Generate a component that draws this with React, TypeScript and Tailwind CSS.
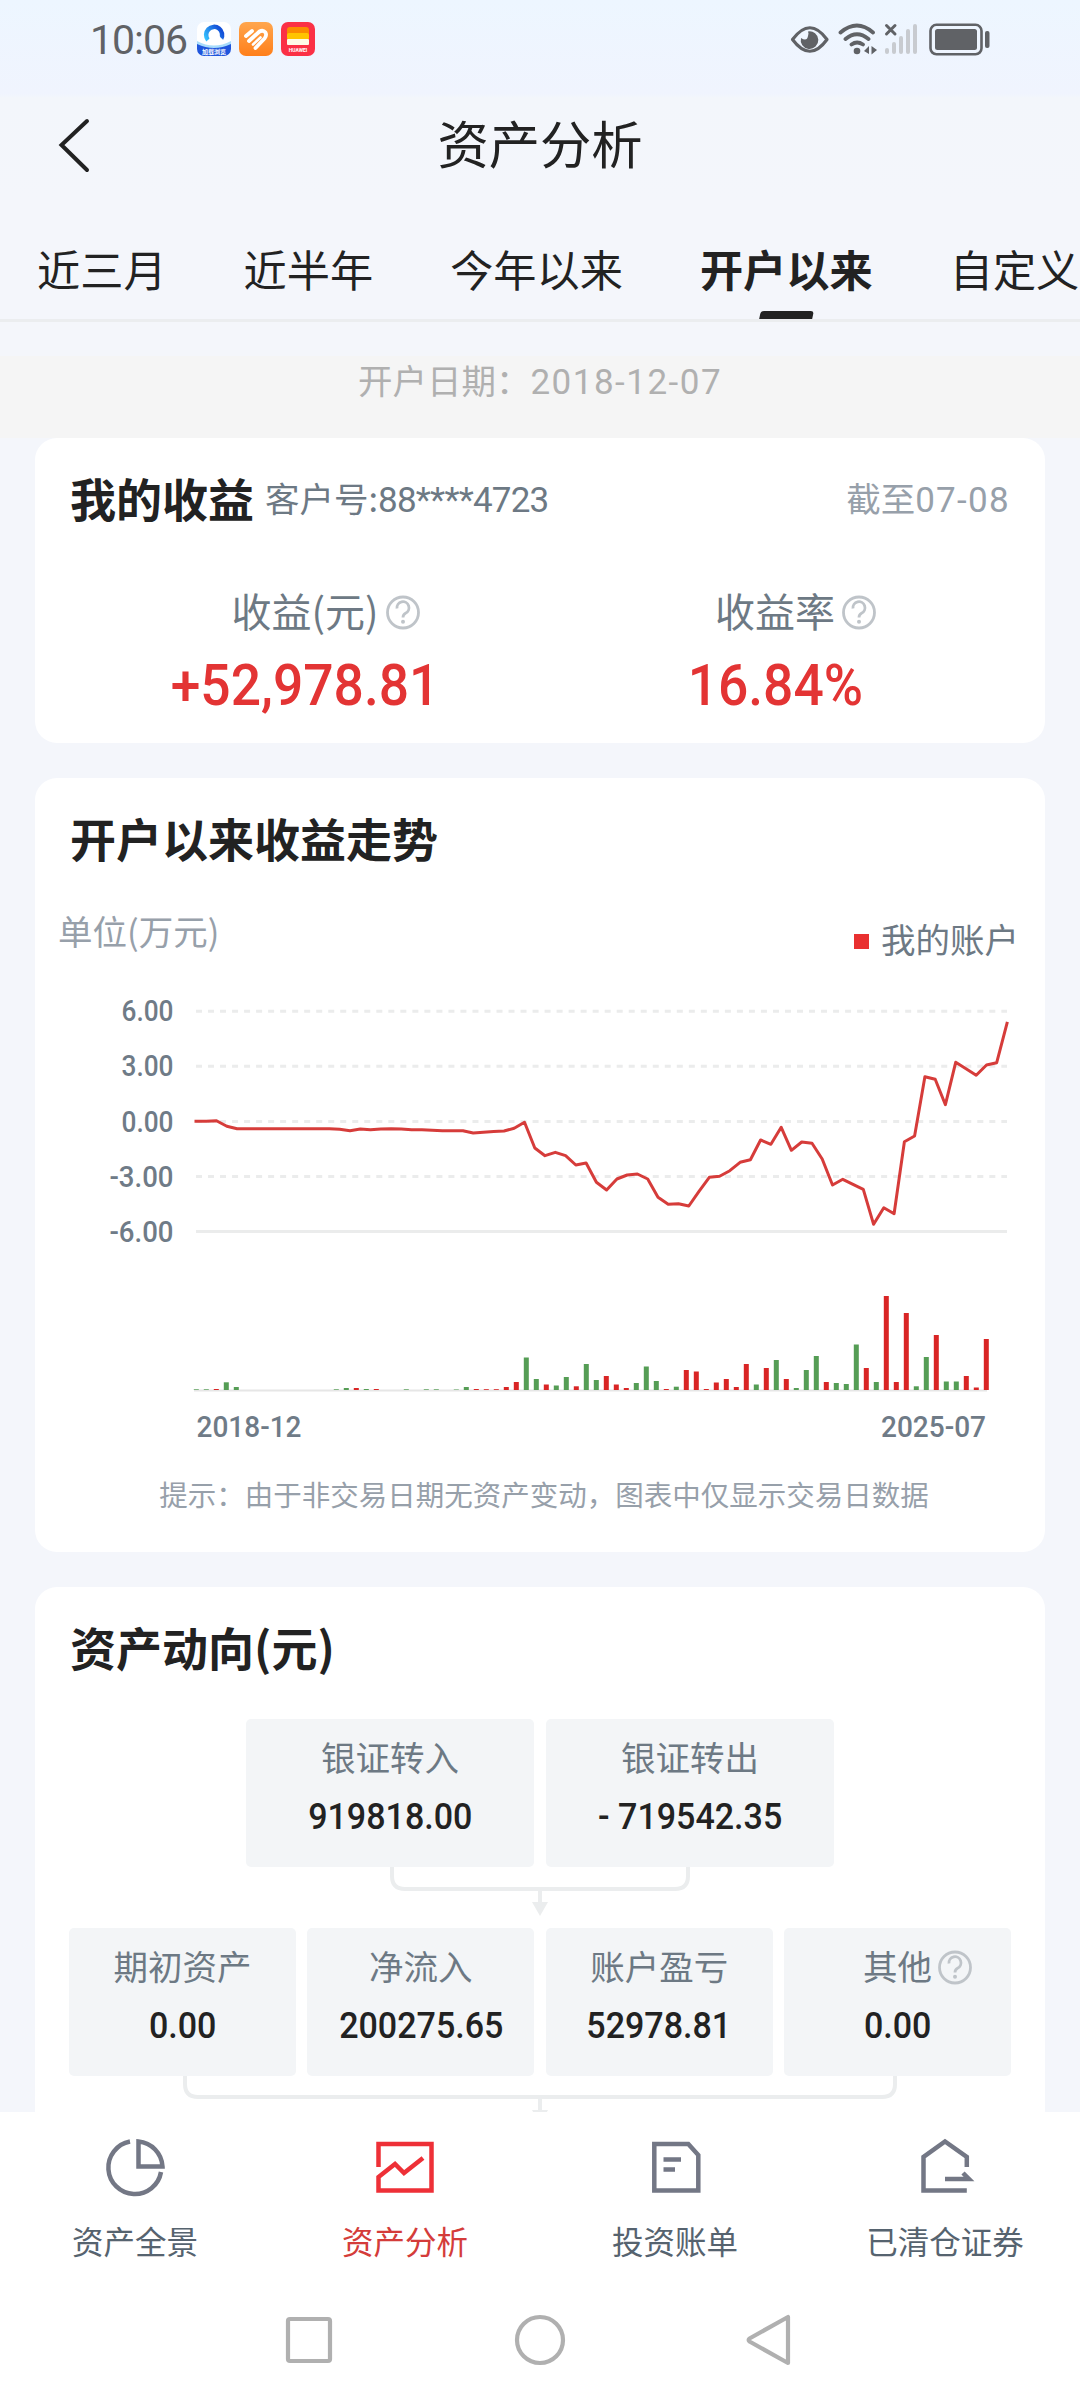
import type { ReactNode } from "react";

interface Bar {
    color: 'r' | 'g';
    height: number;
}

const TABS = ['近三月', '近半年', '今年以来', '开户以来', '自定义'];
const ACTIVE_TAB = '开户以来';

// y position inside the trend chart, one point per month
const TREND = [
    141.3, 141.3, 140.7, 146.3, 148.7, 148.7, 148.7, 148.7, 148.7, 148.7,
    148.7, 148.7, 148.7, 148.7, 149.3, 150.7, 149, 149.8, 149, 148.7,
    149, 149.7, 149.7, 150.3, 150.7, 150.7, 150.8, 153, 152.3, 151.5,
    151, 148.3, 142.3, 168, 175.7, 172.3, 175.7, 185, 183, 202.3,
    210, 199, 195, 194, 199, 217.3, 224.3, 223.7, 226, 211.3,
    197.3, 196.3, 190.7, 182.3, 179.7, 160, 164.3, 147.3, 170.3, 162,
    163.3, 179, 205, 199.3, 204.3, 209.3, 244.3, 227.7, 233.7, 161.7,
    156, 96.7, 99.3, 124.7, 82.3, 88.7, 95.3, 85, 82.7, 43.3,
];

const BARS = (
    'g.7 g.7 r1 g7.7 g3 g0 g0 g0 g0 g0 g0 g0 g0 g0 g.7 g2 r2 g1 r1 g0 ' +
    'g0 g.7 g0 g.7 g.7 g0 g.5 g3 r1 r.8 r.8 r3 r8 g32.5 g11 r5.5 g4.5 g13 r3.7 g26 ' +
    'g10 r14 r5.5 r2 g7 g23.5 g9 r1 g3.3 r20 r18.5 r1 r7.5 r11 r3 r26 g5.5 r22 g30 r11 ' +
    'g2 g20 g34 r8 g7 g6 g45.5 r22 g8 r94 r8 r77 g3.7 g33 r55 g8.5 g8.5 r14 r2.5 r51'
).split(' ').map((item) => ({ color: item[0], height: Number(item.slice(1)) }) as Bar);

const StatusBar = () => {
    return <div className="h-[80px] flex items-start justify-between pl-[90px] pr-[90px] text-[#606266]">
        <div className="flex items-start pt-[22px]">
            <div className="w-[107px] -mt-[6px] text-[41px] leading-[48px] tracking-[-1px] whitespace-nowrap font-['Roboto',sans-serif]">10:06</div>
            <div className="flex gap-2">
                <svg width="34" height="34" viewBox="0 0 34 34">
                    <defs>
                        <linearGradient id="ring" x1="0" y1="1" x2="1" y2="0.4">
                            <stop offset="0" stopColor="#35c3ff" />
                            <stop offset="1" stopColor="#1450d8" />
                        </linearGradient>
                    </defs>
                    <rect width="34" height="34" rx="7" fill="#fff" />
                    <path d="M0 19Q17 28 34 19V27H0Z" fill="#a8dcfb" />
                    <path d="M0 22Q17 30 34 22V27A7 7 0 0 1 27 34H7A7 7 0 0 1 0 27Z" fill="#1f55dc" />
                    <path d="M11 18A8 8 0 1 1 24 17" fill="none" stroke="url(#ring)" strokeWidth="4.5" />
                    <path d="M13 22A4 4 0 0 1 15 15A5 5 0 0 1 24 16A3.5 3.5 0 0 1 25 22Z" fill="#fff" />
                    <text x="17" y="31.5" fontSize="6" fontWeight="700" fill="#fff" textAnchor="middle" fontFamily="Noto Sans CJK SC">加载浏览</text>
                </svg>
                <svg width="34" height="34" viewBox="0 0 34 34">
                    <defs>
                        <linearGradient id="orange" x1="0" y1="0" x2="0" y2="1">
                            <stop offset="0" stopColor="#ffa64d" />
                            <stop offset="1" stopColor="#ff7f1a" />
                        </linearGradient>
                    </defs>
                    <rect width="34" height="34" rx="7" fill="url(#orange)" />
                    <path d="M7 14L13 9M10 19L20.500 9.500Q24 7.500 26.500 10.500Q28 13.500 25.500 16.500L16.500 26" fill="none" stroke="#fff" strokeWidth="3.800" strokeLinecap="round" strokeLinejoin="round" />
                    <path d="M14 22.500L21.500 15.500" stroke="#fff" strokeWidth="2.600" strokeLinecap="round" />
                </svg>
                <svg width="34" height="34" viewBox="0 0 34 34">
                    <rect width="34" height="34" rx="7" fill="#fb3045" />
                    <rect x="6" y="5" width="22" height="9" rx="3" fill="#fb8b00" />
                    <rect x="6" y="11" width="22" height="7" rx="2" fill="#ffc400" />
                    <rect x="6" y="17" width="22" height="6" rx="1" fill="#fffbe8" />
                    <text x="17" y="29.500" fontSize="5" fontWeight="700" fill="#fff" textAnchor="middle" fontFamily="Roboto">HUAWEI</text>
                </svg>
            </div>
        </div>
        <svg width="200" height="36" viewBox="790 22 200 36" className="mt-[22px]">
            <path d="M792.500 39.500Q810 16 827 39.500Q810 63 792.500 39.500Z" fill="none" stroke="#606266" strokeWidth="3.200" strokeLinejoin="round" />
            <path d="M808 31.500A8.800 8.800 0 1 1 801 38Q807 42 808 36Q809 33 808 31.500Z" fill="#606266" />
            <path d="M840.500 32.500Q857 18.500 873 32.500M845.500 39Q857 29.500 868.500 39M851.500 44.500Q857 40.500 863 44.500" fill="none" stroke="#606266" strokeWidth="3.800" strokeLinecap="round" />
            <circle cx="857" cy="51" r="3.300" fill="#606266" />
            <path d="M869 46V54L864 51ZM871.500 46V54.500L877 50Z" fill="#606266" />
            <path d="M886.500 25.500L895 34M895 25.500L886.500 34" stroke="#606266" strokeWidth="3" strokeLinecap="round" />
            <path d="M887 50V52M894 44V52M901 38V52M908 31V52M915 26V52" stroke="#c8cbd0" strokeWidth="4" strokeLinecap="round" />
            <rect x="930.500" y="24.800" width="51" height="29.500" rx="6" fill="none" stroke="#606266" strokeWidth="2.600" />
            <rect x="935" y="29" width="42" height="21" rx="2.500" fill="#606266" />
            <rect x="985" y="31" width="4.500" height="17" rx="2" fill="#606266" />
        </svg>
    </div>
}

const HelpIcon = () => {
    return <svg width="34" height="35" viewBox="0 0 34 35" fill="none" stroke="#bfc4c9" strokeWidth="2.800">
        <circle cx="17" cy="17.500" r="15.500" />
        <path d="M11 13.500A6 6 0 1 1 19.500 18.200Q17 19.500 17 22.500" strokeWidth="2.800" />
        <circle cx="17" cy="26.800" r="2" fill="#bfc4c9" stroke="none" />
    </svg>
}

const Card = ({ className, children }: { className: string; children: ReactNode }) => {
    return <section className={`mx-[35px] rounded-[22px] bg-white ${className}`}>{children}</section>
}

const CardTitle = ({ children }: { children: ReactNode }) => {
    return <h2 className="pb-[5px] text-[46px] leading-[55px] font-bold text-[#222222] whitespace-nowrap">{children}</h2>
}

const Metric = ({ label, value }: { label: string; value: string }) => {
    return <div className="flex-1 flex flex-col items-center">
        <div className="relative text-[40px] leading-[56px] text-[#6d7984]">
            {label}
            <div className="absolute left-full top-[13px] ml-[7px]"><HelpIcon /></div>
        </div>
        <div className="mt-[11px] text-[58px] leading-[72px] font-medium text-[#e33434] scale-x-[0.92] font-['Roboto',sans-serif]">{value}</div>
    </div>
}

const TrendChart = () => {
    const points = TREND.map((y, i) => `${(161 + i * 10.266).toFixed(1)},${y}`).join(' ');

    return <svg width="1010" height="470" viewBox="0 0 1010 470" className="block">
        {['6.00', '3.00', '0.00', '-3.00', '-6.00'].map((label, i) => (
            <g key={label}>
                <text x="138.500" y={41.300 + i * 55.1} textAnchor="end" textLength={label.length > 4 ? 64 : 52} lengthAdjust="spacingAndGlyphs" fontSize="29" fontWeight="500" fontFamily="Roboto" fill="#6f7b87">{label}</text>
                <path d={`M161 ${31.300 + i * 55.050}H972`} stroke="#ebecec" strokeWidth="3" strokeDasharray={i < 4 ? '6 6.020' : undefined} />
            </g>
        ))}
        <polyline points={points} fill="none" stroke="#d63c3a" strokeWidth="3" strokeLinejoin="round" strokeLinecap="square" />
        <path d="M159 410.500H952" stroke="#e6e6e6" strokeWidth="2" />
        {BARS.map((bar, i) => (
            <rect key={i} x={158.800 + i * 10} y={410 - bar.height} width="5" height={bar.height} fill={bar.color === 'r' ? '#d92525' : '#559d55'} />
        ))}
        <text x="161.500" y="457" textLength="105" lengthAdjust="spacingAndGlyphs" fontSize="29" fontWeight="500" fontFamily="Roboto" fill="#6f7b87">2018-12</text>
        <text x="846" y="457" textLength="105" lengthAdjust="spacingAndGlyphs" fontSize="29" fontWeight="500" fontFamily="Roboto" fill="#6f7b87">2025-07</text>
    </svg>
}

const FlowNode = ({ label, value, help }: { label: string; value: string; help?: boolean }) => {
    return <div className="flex-1 h-[148px] rounded-[5px] bg-[#f3f5f7] flex flex-col items-center pt-[12px]">
        <div className="relative text-[34.5px] leading-[50px] text-[#6d7984]">
            {label}
            {help && <div className="absolute left-full top-[10px] ml-[6px]"><HelpIcon /></div>}
        </div>
        <div className="mt-[11px] text-[37px] leading-[50px] font-medium text-[#222222] scale-x-[0.92] whitespace-nowrap font-['Roboto',sans-serif]">{value}</div>
    </div>
}

const NAV = [
    {
        label: '资产全景',
        icon: <path d="M130 29.500A26.500 26.500 0 1 0 161 60M138.500 29.500V54.500H162.500A26.500 26.500 0 0 0 138.500 29.500Z" />,
    },
    {
        label: '资产分析',
        icon: <path d="M108.500 55V32H161.500V78.500H108.500V65L125 52L134 61L153 46" />,
    },
    {
        label: '投资账单',
        icon: <path d="M114.300 32H148.300L158.300 43V78.500H114.300ZM123.500 47.500H141M123.500 57.500H135" />,
    },
    {
        label: '已清仓证券',
        icon: <path d="M156.800 78.500H113.500V45L135 29.500L156.800 45V55M135 67H159L153 61" />,
    },
];

const BottomNav = () => {
    return <nav className="h-[288px] bg-white flex flex-col">
        <div className="flex">
            {NAV.map((item) => {
                const active = item.label === '资产分析';
                return <div key={item.label} className="w-[270px] flex flex-col items-center">
                    <svg width="270" height="102" viewBox="0 0 270 102" fill="none" stroke={active ? '#ee3037' : '#737785'} strokeWidth="4.500">{item.icon}</svg>
                    <span className={`mb-[2px] text-[31.5px] leading-[52px] ${active ? 'text-[#d43c3a]' : 'text-[#56636f]'}`}>{item.label}</span>
                </div>
            })}
        </div>
        <svg width="1080" height="132" viewBox="0 0 1080 132" fill="none" stroke="#b0b0b0" strokeWidth="4.200" strokeLinejoin="round">
            <rect x="288" y="51" width="42" height="42" rx="2" />
            <circle cx="540" cy="72" r="23" />
            <path d="M788 49V95L749.500 73.500Q748 72 749.500 70.500Z" />
        </svg>
    </nav>
}

const App = () => {
    return <div className="w-[1080px] h-[2400px] overflow-hidden flex flex-col bg-[#f4f6fb] font-['Noto_Sans_CJK_SC',sans-serif]">
        <header className="h-[322px] shrink-0 bg-[linear-gradient(#edf6ff_0px,#f0f4fe_94px,#f3f6fb_98px,#f4f6fb_200px)] border-b-[3px] border-[#ebedef]">
            <StatusBar />
            <div className="h-[130px] flex items-center">
                <svg width="120" height="60" viewBox="0 0 120 60" fill="none" stroke="#222222" strokeWidth="4" strokeLinecap="round">
                    <path d="M87 6L61.500 30L87 55" />
                </svg>
                <h1 className="w-[840px] pb-[6px] text-center text-[51.3px] leading-[70px] text-[#222222]">资产分析</h1>
            </div>
            <div className="h-[109px] flex gap-[77px] pl-[37px] pt-[28px] overflow-hidden">
                {TABS.map((tab) => (
                    <div key={tab} className="shrink-0 flex flex-col items-center">
                        <span className={`text-[43.2px] leading-[60px] text-[#222222] ${tab === ACTIVE_TAB ? 'font-bold' : ''}`}>{tab}</span>
                        {tab === ACTIVE_TAB && <div className="mt-[13px] w-[53px] h-[8px] rounded-t-[3px] bg-[#222222] -skew-x-12"></div>}
                    </div>
                ))}
            </div>
        </header>

        <main className="h-[1790px] shrink-0 overflow-hidden pt-[34px]">
            <div className="h-[82px] bg-[#f5f5f5] text-center text-[34.5px] leading-[46px] text-[#b0b0b0]">
                开户日期：<span className="text-[35px] tracking-[1.5px] font-['Roboto',sans-serif]">2018-12-07</span>
            </div>

            <Card className="h-[305px] pt-[32px] px-[35px]">
                <div className="flex items-center text-[34.5px]">
                    <CardTitle>我的收益</CardTitle>
                    <span className="ml-[11px] text-[#6d7984]">客户号:<span className="text-[35px] tracking-[-0.8px] font-['Roboto',sans-serif]">88****4723</span></span>
                    <span className="ml-auto text-[#97a0aa]">截至<span className="text-[35px] tracking-[1.3px] font-['Roboto',sans-serif]">07-08</span></span>
                </div>
                <div className="flex mt-[52px]">
                    <Metric label="收益(元)" value="+52,978.81" />
                    <Metric label="收益率" value="16.84%" />
                </div>
            </Card>

            <Card className="h-[774px] mt-[35px] pt-[32px]">
                <div className="pl-[35px]"><CardTitle>开户以来收益走势</CardTitle></div>
                <div className="h-[110px] flex justify-between pl-[23px] pr-[26px] pt-[35px] text-[34.5px] leading-[50px]">
                    <span className="text-[#97a0aa]">单位(万元)</span>
                    <div className="flex items-center gap-[12px] mt-[8px] h-[50px] text-[#6d7984]">
                        <div className="mt-[6px] size-[15px] bg-[#e93030]"></div>
                        我的账户
                    </div>
                </div>
                <TrendChart />
                <p className="pl-[8px] pt-[24px] text-center text-[28.5px] leading-[40px] text-[#97a0aa]">提示：由于非交易日期无资产变动，图表中仅显示交易日数据</p>
            </Card>

            <Card className="h-[600px] mt-[35px] pt-[32px]">
                <div className="pl-[35px]"><CardTitle>资产动向(元)</CardTitle></div>
                <div className="flex gap-[12px] mt-[40px] mx-[211px]">
                    <FlowNode label="银证转入" value="919818.00" />
                    <FlowNode label="银证转出" value="- 719542.35" />
                </div>
                <svg width="1010" height="61" viewBox="0 0 1010 61" className="block" fill="none" stroke="#ebedee" strokeWidth="4">
                    <path d="M357 0V9Q357 22 370 22H640Q653 22 653 9V0M505 22V36" />
                    <path d="M497 35H513L505 49Z" fill="#ebedee" stroke="none" />
                </svg>
                <div className="flex gap-[11.500px] px-[34px]">
                    <FlowNode label="期初资产" value="0.00" />
                    <FlowNode label="净流入" value="200275.65" />
                    <FlowNode label="账户盈亏" value="52978.81" />
                    <FlowNode label="其他" value="0.00" help />
                </div>
                <svg width="1010" height="61" viewBox="0 0 1010 61" className="block" fill="none" stroke="#ebedee" strokeWidth="4">
                    <path d="M150 0V8Q150 21 163 21H847Q860 21 860 8V0M505 21V36" />
                    <path d="M497 34H513L505 48Z" fill="#ebedee" stroke="none" />
                </svg>
            </Card>
        </main>

        <BottomNav />
    </div>
}

export default App
